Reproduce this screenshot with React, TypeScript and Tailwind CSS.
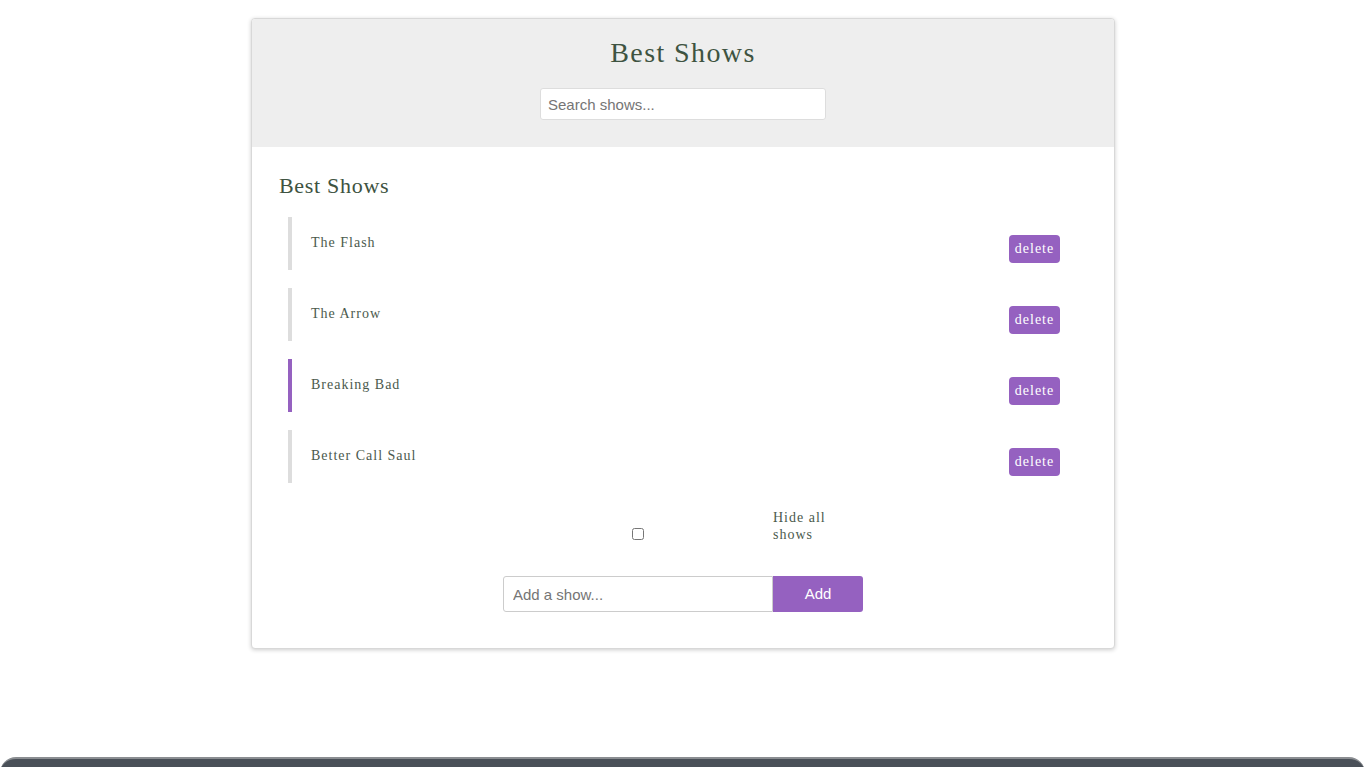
import React from "react";

const shows = [
  { name: "The Flash", active: false },
  { name: "The Arrow", active: false },
  { name: "Breaking Bad", active: true },
  { name: "Better Call Saul", active: false },
];

export default function App() {
  return (
    <div className="min-h-screen bg-white" style={{ fontFamily: '"Liberation Serif", serif' }}>
      <div className="pt-[18px] flex justify-center">
        <div className="w-[864px] ml-[1px] rounded-[4px] border border-[#d8d8d8] bg-white shadow-[0_1px_4px_rgba(0,0,0,0.2)] overflow-hidden">
          <div className="bg-[#eeeeee] h-[128px] flex flex-col items-center">
            <h1 className="mt-[17px] text-[28px] leading-[34px] tracking-[1.4px] text-[#3e5341]">Best Shows</h1>
            <input
              type="text"
              placeholder="Search shows..."
              className="mt-[18px] w-[286px] h-[32px] rounded-[3px] border border-[#dddddd] bg-white px-[7px] text-[15px] text-[#555] placeholder:text-[#757575] outline-none"
              style={{ fontFamily: '"Liberation Sans", Arial, sans-serif' }}
            />
          </div>
          <div className="px-[27px] pt-[25px] pb-[36px]">
            <h2 className="text-[22px] leading-[28px] tracking-[0.7px] text-[#3e5341]">Best Shows</h2>
            <ul className="mt-[17px] ml-[9px] flex flex-col gap-[18px]">
              {shows.map((s) => (
                <li
                  key={s.name}
                  className={`h-[53px] border-l-4 flex justify-between pl-[19px] pr-[27px] ${
                    s.active ? "border-[#9561c0]" : "border-[#dddddd]"
                  }`}
                >
                  <span className="mt-[17px] text-[14px] leading-[18px] tracking-[1px] text-[#4b5a4d]">{s.name}</span>
                  <button className="mt-[18px] w-[51px] h-[28px] rounded-[4px] bg-[#9561c0] text-white text-[14px] tracking-[1px] leading-[28px] text-center">
                    delete
                  </button>
                </li>
              ))}
            </ul>
            <div className="mt-[26px] flex justify-center">
              <div className="grid grid-cols-[270px_90px]">
                <div className="flex justify-center items-end pb-[3px]">
                  <input type="checkbox" className="w-[12px] h-[12px] m-0" />
                </div>
                <label className="text-[14px] leading-[17px] tracking-[1px] text-[#4b5a4d]">Hide all shows</label>
              </div>
            </div>
            <div className="mt-[33px] flex justify-center">
              <input
                type="text"
                placeholder="Add a show..."
                className="w-[270px] h-[36px] rounded-l-[3px] border border-[#cccccc] px-[9px] text-[15px] placeholder:text-[#757575] outline-none"
                style={{ fontFamily: '"Liberation Sans", Arial, sans-serif' }}
              />
              <button
                className="w-[90px] h-[36px] rounded-r-[3px] bg-[#9561c0] text-white text-[15px]"
                style={{ fontFamily: '"Liberation Sans", Arial, sans-serif' }}
              >
                Add
              </button>
            </div>
          </div>
        </div>
      </div>
      <div className="mt-[108px] h-[60px] rounded-t-[16px] bg-[#4a5058] border-t-2 border-[#8a8d91]"></div>
    </div>
  );
}
